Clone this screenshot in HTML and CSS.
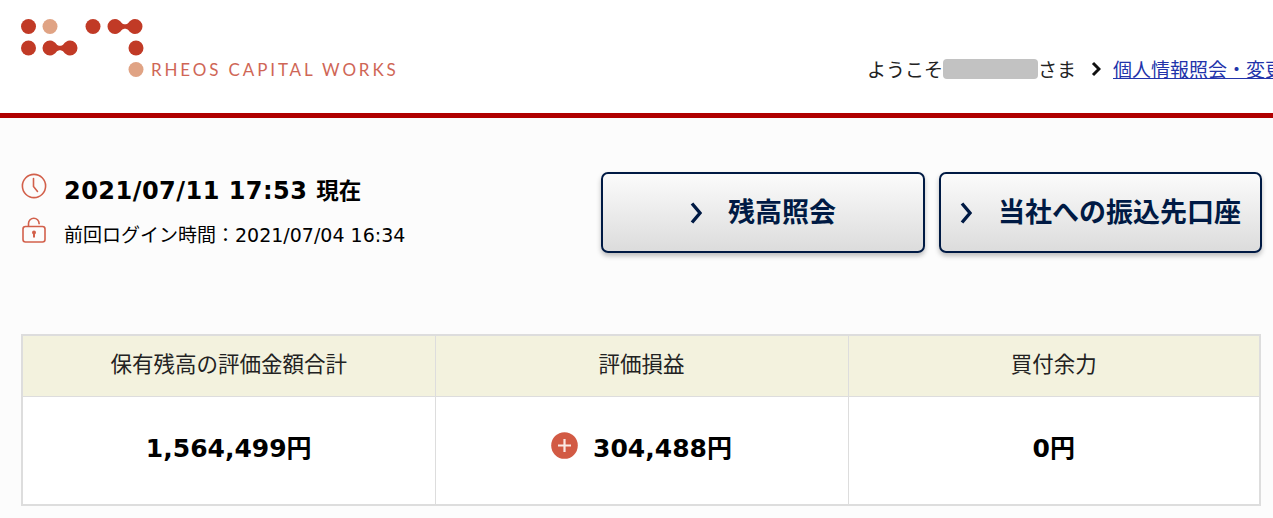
FILE: index.html
```html
<!DOCTYPE html>
<html lang="ja">
<head>
	<meta charset="utf-8" />
	<title>RHEOS CAPITAL WORKS</title>
	<link rel="stylesheet" href="styles.css">
</head>
<body>
	<header class="site_header">
		<svg class="logo" width="380" height="64" viewBox="0 0 380 64">
			<g fill="#c13a26">
				<circle cx="7.5" cy="7.5" r="7.5"/>
				<circle cx="72" cy="7.500" r="7.5"/>
				<path d="M94 0c3 0 5 1.800 6.500 3.700 2 2 5 2 7 0 1.500-1.900 3.500-3.700 6.500-3.700a7.500 7.500 0 0 1 0 15c-3 0-5-1.800-6.500-3.700-2-2-5-2-7 0-1.500 1.900-3.500 3.700-6.500 3.700a7.500 7.500 0 0 1 0-15z"/>
				<circle cx="7.5" cy="29" r="7.5"/>
				<path d="M29 21.500c3 0 5 1.800 6.500 3.700 2 2 5 2 7 0 1.500-1.900 3.500-3.700 6.500-3.700a7.500 7.500 0 0 1 0 15c-3 0-5-1.800-6.500-3.700-2-2-5-2-7 0-1.500 1.900-3.500 3.700-6.500 3.700a7.500 7.500 0 0 1 0-15z"/>
				<circle cx="115" cy="29" r="7.5"/>
			</g>
			<circle cx="29" cy="7.5" r="7.5" fill="#e0a384"/>
			<circle cx="115" cy="50.5" r="7.5" fill="#e0a384"/>
			<text class="logo_text" x="130" y="57">RHEOS CAPITAL WORKS</text>
		</svg>
		<div class="user_nav">
			<span class="welcome">ようこそ<span class="masked"></span>さま</span>
			<svg class="nav_arrow" width="10" height="16" viewBox="0 0 10 16"><path d="M2 2l6 6-6 6" fill="none" stroke="#111" stroke-width="3"/></svg>
			<a href="#">個人情報照会・変更</a>
		</div>
	</header>

	<main class="content">
		<section class="top_row">
			<div class="times">
				<div class="now">
					<svg width="26" height="26" viewBox="0 0 26 26" fill="none" stroke="#d2604b" stroke-width="1.6"><circle cx="13" cy="13" r="11.6"/><path d="M12.5 5.5v8l4 5" stroke-linecap="round"/></svg>
					<span>2021/07/11 17:53 <span class="now_suffix">現在</span></span>
				</div>
				<div class="last_login">
					<svg width="26" height="26" viewBox="0 0 26 26" fill="none" stroke="#d2604b" stroke-width="1.6"><rect x="2" y="9.5" width="22" height="15.5" rx="2.5"/><path d="M7.5 9.5V6.500a5.300 5.300 0 0 1 10.600 0v.8"/><circle cx="13" cy="15.5" r="2" fill="#d2604b" stroke="none"/><path d="M13 16v4.500" stroke-width="2"/></svg>
					<span>前回ログイン時間：2021/07/04 16:34</span>
				</div>
			</div>
			<div class="buttons">
				<a class="btn btn_balance" href="#"><svg width="12" height="24" viewBox="0 0 12 24"><path d="M2 2.500l8 9.500-8 9.500" fill="none" stroke="#001a44" stroke-width="3.4"/></svg><span>残高照会</span></a>
				<a class="btn btn_account" href="#"><svg width="12" height="24" viewBox="0 0 12 24"><path d="M2 2.500l8 9.500-8 9.500" fill="none" stroke="#001a44" stroke-width="3.4"/></svg><span>当社への振込先口座</span></a>
			</div>
		</section>

		<table class="summary">
			<tr>
				<th class="col_first">保有残高の評価金額合計</th>
				<th class="col_second">評価損益</th>
				<th>買付余力</th>
			</tr>
			<tr>
				<td>1,564,499円</td>
				<td><svg class="plus" width="27" height="27" viewBox="0 0 27 27"><circle cx="13.5" cy="13.5" r="13.3" fill="#d25a44"/><path d="M13.5 7v13M7 13.5h13" stroke="#fbe9e4" stroke-width="2.2"/></svg>304,488円</td>
				<td>0円</td>
			</tr>
		</table>
	</main>
</body>
</html>
```

FILE: styles.css
```css
html, body {
	margin: 0;
	padding: 0;
}
body {
	width: 1273px;
	height: 518px;
	overflow: hidden;
	background-color: #fcfcfc;
	color: #000;
	font-family: "DejaVu Sans", "Noto Sans CJK JP", sans-serif;
}

.site_header {
	display: flex;
	justify-content: space-between;
	align-items: flex-start;
	box-sizing: border-box;
	height: 118px;
	padding: 19px 0 0 21px;
	background-color: #fff;
	border-bottom: 5px solid #b00000;
}
.logo {
	display: block;
}
.logo_text {
	font-family: Lato, sans-serif;
	font-size: 17px;
	letter-spacing: 2.87px;
	fill: #cf6656;
}
.user_nav {
	display: flex;
	align-items: center;
	flex: none;
	width: 406px;
	margin-top: 38px;
	font-family: "Noto Sans CJK JP", sans-serif;
	font-size: 19px;
	line-height: 24px;
	white-space: nowrap;
	color: #222;
}
.welcome {
	display: flex;
	align-items: center;
}
.masked {
	width: 95px;
	height: 20px;
	border-radius: 4px;
	background-color: #c2c2c2;
}
.nav_arrow {
	flex: none;
	margin: 0 12px 0 15px;
}
.user_nav a {
	color: #2233aa;
}

.top_row {
	display: flex;
	justify-content: space-between;
	padding: 54px 11px 0 21px;
	height: 216px;
	box-sizing: border-box;
}
.now, .last_login {
	display: flex;
	align-items: center;
	gap: 17px;
}
.now svg, .last_login svg {
	margin-bottom: 7px;
}
.now {
	height: 30px;
	margin-top: 2px;
	font-size: 24px;
	letter-spacing: 0.47px;
	font-weight: bold;
}
.now_suffix {
	font-size: 22.5px;
	letter-spacing: 0;
}
.last_login {
	margin-top: 14px;
	height: 30px;
	font-size: 19px;
}
.buttons {
	display: flex;
	gap: 14px;
}
.btn {
	display: flex;
	align-items: center;
	justify-content: center;
	gap: 26px;
	box-sizing: border-box;
	height: 81px;
	border: 2px solid #001a44;
	border-radius: 7px;
	background: linear-gradient(#fbfbfb, #dcdcdc);
	box-shadow: 0 3px 5px rgba(0, 0, 0, 0.25);
	color: #001a44;
	font-family: "Noto Sans CJK JP", sans-serif;
	font-size: 27px;
	font-weight: bold;
	text-decoration: none;
}
.btn span {
	margin-bottom: 5px;
}
.btn_balance {
	width: 324px;
}
.btn_account {
	width: 323px;
}

.summary {
	width: 1240px;
	height: 172px;
	margin-left: 21px;
	border-collapse: collapse;
	table-layout: fixed;
	background-color: #fff;
	border: 2px solid #dddddd;
}
.summary th, .summary td {
	padding: 0;
	border: 1px solid #dddddd;
	text-align: center;
}
.summary .col_first {
	width: 413px;
}
.summary .col_second {
	width: 413px;
}
.summary th {
	height: 61px;
	padding-bottom: 6px;
	box-sizing: border-box;
	background-color: #f3f2de;
	font-family: "Noto Sans CJK JP", sans-serif;
	font-size: 21.5px;
	font-weight: normal;
	color: #222;
}
.summary td {
	padding-bottom: 8px;
	font-size: 25px;
	font-weight: bold;
}
.plus {
	margin-right: 15px;
	vertical-align: -2px;
}
```
